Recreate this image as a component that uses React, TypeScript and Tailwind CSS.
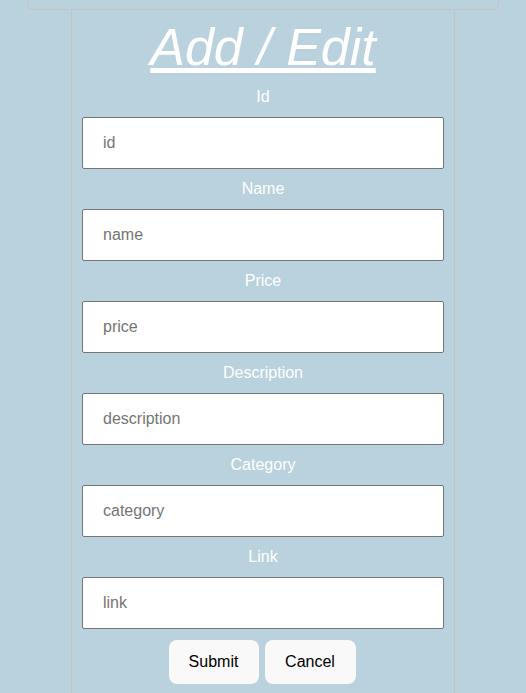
import React from 'react'

const fields = [
  { label: 'Id', name: 'id' },
  { label: 'Name', name: 'name' },
  { label: 'Price', name: 'price' },
  { label: 'Description', name: 'description' },
  { label: 'Category', name: 'category' },
  { label: 'Link', name: 'link' },
]

export default function App() {
  return (
    <div className="min-h-[693px] bg-[#b9d2dd] font-['Liberation_Sans',Arial,sans-serif]">
      <div className="mx-[27px] h-[10px] rounded-b-md border border-t-0 border-[#c4c4c4]" />
      <div className="mx-auto w-[384px] min-h-[683px] border-x border-[#c4c4c4] flex flex-col items-center">
        <h1 className="mt-[7px] text-[52px] leading-[60px] italic underline text-white">
          Add / Edit
        </h1>
        <form className="flex flex-col items-center">
          {fields.map((f) => (
            <div key={f.name} className="flex flex-col items-center">
              <label className="h-10 flex items-center text-base text-white">
                {f.label}
              </label>
              <input
                name={f.name}
                placeholder={f.name}
                className="w-[362px] h-[52px] bg-white border border-[#767676] rounded-[2px] pl-5 text-base text-black placeholder:text-[#757575] outline-none"
              />
            </div>
          ))}
          <div className="mt-[11px] flex gap-[6px] -translate-x-px">
            <button type="button" className="w-[90px] h-11 rounded-lg bg-[#f9f9f9] text-base text-black">
              Submit
            </button>
            <button type="button" className="w-[91px] h-11 rounded-lg bg-[#f9f9f9] text-base text-black">
              Cancel
            </button>
          </div>
        </form>
      </div>
    </div>
  )
}
